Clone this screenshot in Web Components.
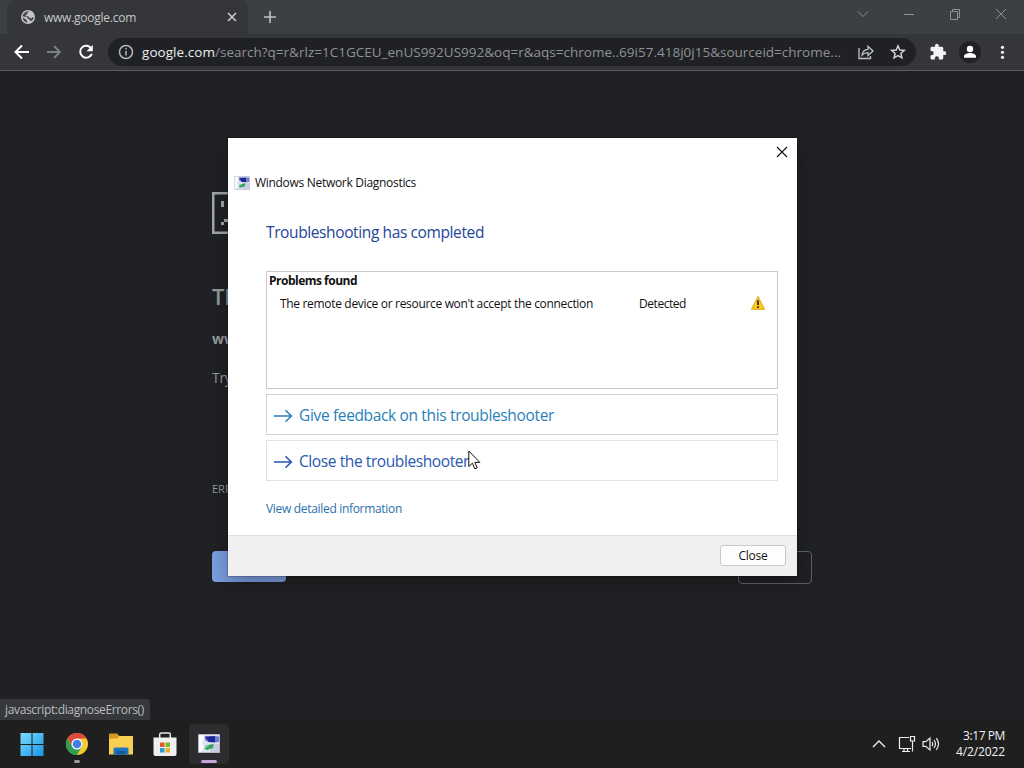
<!DOCTYPE html>
<html lang="en">
<head>
<meta charset="utf-8">
<title>www.google.com</title>
<style>
  html, body { margin: 0; height: 100%; overflow: hidden; background: #202124; }
  body { font-family: "Open Sans", "Noto Sans", sans-serif; }
</style>
</head>
<body>
<desktop-screen>
  <browser-tabs slot="browser" label="www.google.com"></browser-tabs>
  <browser-toolbar slot="browser" host="google.com" path="/search?q=r&amp;rlz=1C1GCEU_enUS992US992&amp;oq=r&amp;aqs=chrome..69i57.418j0j15&amp;sourceid=chrome..."></browser-toolbar>
  <error-page slot="browser"></error-page>
  <status-bubble slot="overlay"><fit-label width="139">javascript:diagnoseErrors()</fit-label></status-bubble>
  <diag-dialog slot="overlay">
    <fit-label slot="app" width="161">Windows Network Diagnostics</fit-label>
    <fit-label slot="heading" width="218">Troubleshooting has completed</fit-label>
    <problem-list>
      <fit-label slot="title" width="88">Problems found</fit-label>
      <fit-label slot="problem" width="313">The remote device or resource won't accept the connection</fit-label>
      <fit-label slot="state" width="47">Detected</fit-label>
    </problem-list>
    <command-link><fit-label width="255">Give feedback on this troubleshooter</fit-label></command-link>
    <command-link variant="hot"><fit-label width="170">Close the troubleshooter</fit-label></command-link>
    <fit-label slot="details" width="136">View detailed information</fit-label>
    <fit-label slot="button" width="29">Close</fit-label>
  </diag-dialog>
  <mouse-cursor slot="overlay"></mouse-cursor>
  <task-bar slot="taskbar">
    <fit-label slot="time" width="42">3:17 PM</fit-label>
    <fit-label slot="date" width="49">4/2/2022</fit-label>
  </task-bar>
</desktop-screen>

<script>
"use strict";

(function () {
  /* ── Helper: class from a html string ──────────────────────── */
  function define(name, html, setup) {
    var tpl = document.createElement("template");
    tpl.innerHTML = html;
    customElements.define(name, class extends HTMLElement {
      constructor() {
        super();
        this.attachShadow({ mode: "open" }).appendChild(tpl.content.cloneNode(true));
      }
      connectedCallback() {
        if (setup) setup(this, this.shadowRoot);
      }
    });
  }

  /* ── Desktop ───────────────────────────────────────────────── */
  define("desktop-screen", `
    <style>
      :host { display: flex; flex-direction: column; position: relative; width: 1024px; height: 768px; overflow: hidden; }
      .browser { display: flex; flex-direction: column; height: 720px; background: #202124; }
    </style>
    <div class="browser"><slot name="browser"></slot></div>
    <slot name="taskbar"></slot>
    <slot name="overlay"></slot>
  `);

  /* ── Tab strip ─────────────────────────────────────────────── */
  define("browser-tabs", `
    <style>
      :host { display: flex; height: 34px; flex: none; background: #3c4043; color: #c6c8ca; justify-content: space-between; }
      .left { display: flex; align-items: center; padding-left: 7px; }
      .tab { display: flex; align-items: center; box-sizing: border-box; width: 241px; height: 34px; padding: 0 10px 0 13px; background: #35363a; border-radius: 8px 8px 0 0; font-size: 12px; }
      .tab .text { margin-left: 8px; flex: 1; }
      svg { display: block; fill: none; }
      .plus { margin-left: 15px; }
      .win { display: flex; stroke: #8e9194; }
      .win svg { margin-top: 7px; }
    </style>
    <div class="left">
      <div class="tab">
        <svg width="16" height="16" viewBox="0 0 16 16"><circle cx="8" cy="8" r="7" fill="#c1c3c6"/><path fill="#35363a" d="M9.300 2.200 7.300 3.700v1.600l-1.600.5v1.400l3 .2.900 1.600 1.700.4 1-1.200 1.500.2c-.2 1.200-.8 2.300-1.700 3.100L10.500 12l-.700-1.300-2-1L7.200 8.200l-4.500-.9c-.5 3 1.700 5.900 4.600 6.300L7 11.500 5.300 10 2.500 8.500C2.300 4.900 5.600 1.700 9.300 2.200z" opacity=".9"/></svg>
        <span class="text"></span>
        <svg width="12" height="12" viewBox="0 0 12 12" stroke="#c9cbcd" stroke-width="1.600"><path d="m2 2 8 8M10 2l-8 8"/></svg>
      </div>
      <svg class="plus" width="14" height="14" viewBox="0 0 14 14" stroke="#bfc2c4" stroke-width="1.600"><path d="M7 1v12M1 7h12"/></svg>
    </div>
    <div class="win">
      <svg width="46" height="14" viewBox="0 0 46 14"><path d="m18 4.500 5 5 5-5"/></svg>
      <svg width="46" height="14" viewBox="0 0 46 14"><path d="M18 7.500h10"/></svg>
      <svg width="46" height="14" viewBox="0 0 46 14"><path d="M18.500 4.500h7v8h-7zM20.500 4.500v-2h7v8h-2"/></svg>
      <svg width="46" height="14" viewBox="0 0 46 14"><path d="m18 2 10 10M28 2 18 12"/></svg>
    </div>
  `, function (el, root) {
    root.querySelector(".text").innerHTML = '<fit-label width="92">' + el.getAttribute("label") + "</fit-label>";
  });

  /* ── Toolbar ───────────────────────────────────────────────── */
  define("browser-toolbar", `
    <style>
      :host { display: flex; align-items: center; flex: none; box-sizing: border-box; height: 37px; padding: 0 9px 0 12px; background: #35363a; border-bottom: 1px solid #5b5d5f; }
      svg { display: block; flex: none; fill: none; }
      .nav { display: flex; gap: 12px; width: 96px; }
      .omnibox { display: flex; align-items: center; box-sizing: border-box; width: 808px; height: 28px; border-radius: 14px; padding: 0 9px 0 9px; background: #202124; font-size: 13.5px; }
      .url { display: flex; margin-left: 7px; flex: 1; }
      .host { color: #eceef0; }
      .path { color: #8f9296; }
      .star { margin-left: 14px; }
      .right { display: flex; align-items: center; margin-left: 13px; }
      .avatar { margin-left: 12px; }
      .dots { margin-left: 15px; }
    </style>
    <div class="nav">
      <svg width="20" height="20" viewBox="0 0 20 20" stroke="#fff" stroke-width="2"><path d="M17 10H4M10 3.500 3.500 10l6.500 6.500"/></svg>
      <svg width="20" height="20" viewBox="0 0 20 20" stroke="#7d8083" stroke-width="1.800"><path d="M3 10h13M10 4l6 6-6 6"/></svg>
      <svg width="20" height="20" viewBox="0 0 20 20"><path d="M15.300 6.500A6 6 0 1 0 15.800 11.800" stroke="#fff" stroke-width="2"/><path d="M16.800 3v6.300h-6.300z" fill="#fff"/></svg>
    </div>
    <div class="omnibox">
      <svg width="18" height="18" viewBox="0 0 18 18" stroke="#b3b6b9" stroke-width="1.500"><circle cx="9" cy="9" r="6.500"/><path d="M9 8v4.500M9 5v1.600"/></svg>
      <div class="url"><span class="host"></span><span class="path"></span></div>
      <svg width="18" height="18" viewBox="0 0 18 18" stroke="#c1c4c7" stroke-width="1.300"><path d="M2 5v10.500h11.500V13M5 12c.5-4 2.500-5.500 6-5.700V3.200L16 8l-5 4.500V9.600c-2.500 0-4.300.6-6 2.400z"/></svg>
      <svg class="star" width="18" height="18" viewBox="0 0 18 18" stroke="#cfd1d4" stroke-width="1.500"><path d="m9 2.800 1.800 4.200 4.500.4-3.400 3 1 4.400L9 12.500l-3.900 2.300 1-4.400-3.400-3 4.500-.4z"/></svg>
    </div>
    <div class="right">
      <svg width="18" height="18" viewBox="0 0 24 24"><path fill="#f1f3f4" d="M20.500 11H19V7c0-1.100-.9-2-2-2h-4V3.500a2.500 2.500 0 0 0-5 0V5H4c-1.100 0-2 .9-2 2v3.800h1.500a2.700 2.700 0 0 1 0 5.400H2V20c0 1.100.9 2 2 2h3.800v-1.500a2.700 2.700 0 0 1 5.400 0V22H17c1.100 0 2-.9 2-2v-4h1.500a2.500 2.500 0 0 0 0-5z"/></svg>
      <svg class="avatar" width="22" height="22" viewBox="0 0 22 22"><circle cx="11" cy="11" r="11" fill="#202124"/><circle cx="11" cy="8" r="3.200" fill="#fff"/><path d="M5 16.800v-1.600c0-2 4-3.200 6-3.200s6 1.200 6 3.200v1.600z" fill="#fff"/></svg>
      <svg class="dots" width="14" height="18" viewBox="0 0 14 18"><g fill="#f1f3f4"><circle cx="6.500" cy="4.300" r="1.600"/><circle cx="6.500" cy="9.300" r="1.600"/><circle cx="6.500" cy="14.300" r="1.600"/></g></svg>
    </div>
  `, function (el, root) {
    function label(sel, width, text) {
      var fit = document.createElement("fit-label");
      fit.setAttribute("width", width);
      fit.textContent = text;
      root.querySelector(sel).appendChild(fit);
    }
    label(".host", 73, el.getAttribute("host"));
    label(".path", 626, el.getAttribute("path"));
  });

  /* ── Page under the dialog ─────────────────────────────────── */
  define("error-page", `
    <style>
      :host { display: block; box-sizing: border-box; width: 1024px; padding: 121px 212px 0; color: #96999d; white-space: nowrap; }
      svg { display: block; }
      .title { margin-top: 43px; height: 40px; line-height: 39px; font-size: 22px; font-weight: 600; }
      .site { margin-top: 12px; height: 20px; line-height: 20px; font-size: 14px; font-weight: 700; }
      .hint { margin-top: 19px; height: 20px; line-height: 20px; font-size: 14px; letter-spacing: -.3px; }
      .code { margin-top: 91px; height: 20px; line-height: 20px; font-size: 11px; }
      .buttons { display: flex; justify-content: space-between; margin-top: 52px; }
      .reload { width: 74px; height: 31px; border-radius: 4px; background: #7b9fe0; }
      .details { box-sizing: border-box; width: 74px; height: 33px; border-radius: 4px; border: 1px solid #5f6368; }
    </style>
    <svg width="36" height="42" viewBox="0 0 36 42" fill="none"><path d="M35 1.250H1.250v39.500H35z" stroke="#a3a6a9" stroke-width="2.500"/><path d="M9 9h3v6H9zM9 30h3v3H9zM12 27h12v3H12z" fill="#a3a6a9"/></svg>
    <div class="title">Th</div>
    <div class="site">ww</div>
    <div class="hint">Try</div>
    <div class="code">ERR</div>
    <div class="buttons"><div class="reload"></div><div class="details"></div></div>
  `);

  define("status-bubble", `
    <style>
      :host { position: absolute; left: 0; top: 699px; box-sizing: border-box; width: 150px; height: 21px; padding-left: 5px; line-height: 21px; font-size: 12px; color: #b9bcbf; background: #37383c; border-radius: 0 4px 0 0; }
    </style>
    <slot></slot>
  `);

  /* ── Diagnostics dialog ────────────────────────────────────── */
  define("diag-dialog", `
    <style>
      :host { position: absolute; left: 228px; top: 138px; width: 569px; height: 438px; display: flex; flex-direction: column; background: #fff; color: #111; font-size: 12px; box-shadow: 0 0 1px #000, 0 8px 20px rgba(0,0,0,.3); }
      svg { display: block; }
      .bar { display: flex; justify-content: flex-end; align-items: center; height: 28px; padding: 0 9px 2px 0; box-sizing: content-box; }
      .app { display: flex; align-items: center; gap: 5px; height: 29px; padding-left: 6px; }
      .body { display: flex; flex-direction: column; gap: 5px; width: 512px; margin: 0 0 0 38px; }
      .heading { display: flex; align-items: center; box-sizing: border-box; height: 69px; padding-top: 1px; color: #24449a; font-size: 15.5px; }
      .details { display: flex; align-items: center; box-sizing: border-box; height: 54px; padding-top: 1px; margin-top: -5px; color: #2a70b0; }
      .foot { display: flex; align-items: center; justify-content: flex-end; box-sizing: border-box; height: 41px; padding-right: 11px; background: #f0f0f0; border-top: 1px solid #dfdfdf; }
      .btn { display: flex; align-items: center; justify-content: center; box-sizing: border-box; width: 66px; height: 21px; margin-bottom: 1px; padding-bottom: 1px; border: 1px solid #c9c9c9; border-radius: 3px; background: #fdfdfd; }
    </style>
    <div class="bar"><svg width="12" height="12" viewBox="0 0 12 12" fill="none" stroke="#111" stroke-width="1.100"><path d="m1 1 10 10M11 1 1 11"/></svg></div>
    <div class="app"><diag-icon size="16"></diag-icon><slot name="app"></slot></div>
    <div class="body">
      <div class="heading"><slot name="heading"></slot></div>
      <slot></slot>
      <div class="details"><slot name="details"></slot></div>
    </div>
    <div class="foot"><div class="btn"><slot name="button"></slot></div></div>
  `);

  define("problem-list", `
    <style>
      :host { display: block; box-sizing: border-box; height: 118px; border: 1px solid #c8ccce; color: #111; }
      .title { height: 18px; line-height: 18px; padding-left: 2px; font-weight: 700; }
      .row { display: grid; grid-template-columns: 359px 111px 16px; align-items: center; height: 26px; padding-left: 13px; }
      svg { display: block; }
    </style>
    <div class="title"><slot name="title"></slot></div>
    <div class="row">
      <slot name="problem"></slot>
      <slot name="state"></slot>
      <svg width="16" height="16" viewBox="0 0 16 16"><path d="M8 1.500 14.600 14.300H1.400z" fill="#fbc91b" stroke="#e3a81d" stroke-linejoin="round"/><path d="M7.100 5.200h1.800v4.800H7.100zM7.100 11.200h1.800V13H7.100z" fill="#3c2a10"/></svg>
    </div>
  `);

  define("command-link", `
    <style>
      :host { display: flex; align-items: center; box-sizing: border-box; height: 41px; padding: 1px 0 0 7px; gap: 6px; border: 1px solid #cbd4d8; color: #2b7fb9; font-size: 15.5px; }
      :host([variant="hot"]) { border-color: #e0e3e5; color: #2a57b0; }
      svg { display: block; margin-top: 2px; }
    </style>
    <svg width="19" height="14" viewBox="0 0 19 14" fill="none" stroke="currentColor" stroke-width="1.600"><path d="M0 7h17.500M11.500 1.200 17.300 7l-5.800 5.800"/></svg>
    <slot></slot>
  `);

  /* two monitors on a grey tile, used by the dialog and the taskbar */
  define("diag-icon", `
    <style>:host { display: block; } svg { display: block; }</style>
    <svg viewBox="0 0 22 19" preserveAspectRatio="none"><path d="M.5.500h21v18H.500z" fill="#dfe3ee" stroke="#b3b8c6"/><path d="M1 1h6L4 9l2 5-3 4H1z" fill="#fafbfd"/><path d="M14 10h7v8h-9z" fill="#c9cddd"/><path d="M6.500 2.500 17 2v6.500L10.500 8z" fill="#1d2796"/><path d="m17 2 4 .5v5.500L17 8.500z" fill="#6f7fd0"/><path d="m6.500 2.500 4 5.500-3-1.500z" fill="#5d6fc4"/><path d="m7.500 11.500 8-1.500-.5 4-6 2-3-1.500 2.500-1z" fill="#2fa35f"/><path d="m6 12.500 4-1.500 1 1.500-4 1z" fill="#83d6a0"/></svg>
  `, function (el, root) {
    root.querySelector("svg").setAttribute("width", el.getAttribute("size"));
    root.querySelector("svg").setAttribute("height", Math.round(el.getAttribute("size") * 0.87));
  });

  define("mouse-cursor", `
    <style>:host { position: absolute; left: 468px; top: 450px; } svg { display: block; }</style>
    <svg width="13" height="20" viewBox="0 0 13 20"><path d="M.8 1v15.500l3.600-3.300 2.400 5.600 2.400-1-2.400-5.400h5z" fill="#fff" stroke="#111"/></svg>
  `);

  /* ── Taskbar ───────────────────────────────────────────────── */
  define("task-bar", `
    <style>
      :host { display: flex; justify-content: space-between; height: 48px; background: #1f1f20; color: #f0f0f0; font-size: 12px; }
      svg { display: block; }
      .apps { display: flex; align-items: center; gap: 4px; padding-left: 12px; }
      .app { display: flex; flex-direction: column; align-items: center; box-sizing: border-box; width: 40px; height: 40px; border-radius: 4px; padding-top: 8px; }
      .chrome { margin-left: 1px; }
      .app.on { background: #2d2d2f; }
      .mark { flex: none; width: 6px; height: 3px; border-radius: 2px; margin-top: 4px; background: #9a9a9a; }
      .on .mark { width: 16px; margin-top: 7px; background: #c9a2dc; }
      .on diag-icon { margin-top: 2px; }
      .tray { display: flex; align-items: center; padding-right: 19px; }
      .net { margin-left: 12px; }
      .sound { margin-left: 6px; }
      .clock { display: flex; flex-direction: column; align-items: flex-end; width: 52px; margin-left: 13px; line-height: 16px; }
    </style>
    <div class="apps">
      <div class="app"><svg width="24" height="24" viewBox="0 0 24 24"><defs><linearGradient id="w" x1="0" y1="0" x2="1" y2="1"><stop offset="0" stop-color="#7fdcfa"/><stop offset="1" stop-color="#1596e6"/></linearGradient></defs><path fill="url(#w)" d="M.500 1h11v11H.500zM12.500 1h11v11h-11zM.500 13h11v11H.500zM12.500 13h11v11h-11z"/></svg></div>
      <div class="app chrome"><svg width="24" height="24" viewBox="0 0 24 24"><circle cx="12" cy="12" r="11" fill="#f6c932"/><path d="M2.470 6.500A11 11 0 0 1 21.530 6.500H12L7.240 14.750z" fill="#dc4a3d"/><path d="M2.470 6.500A11 11 0 0 0 12 23l4.760-8.250H7.240z" fill="#2f9e54"/><circle cx="12" cy="12" r="5.500" fill="#fff"/><circle cx="12" cy="12" r="4.300" fill="#3f7fe4"/></svg><div class="mark"></div></div>
      <div class="app"><svg width="26" height="24" viewBox="0 0 26 24"><path d="M1 2.500a1 1 0 0 1 1-1h7l2.500 2.500H24a1 1 0 0 1 1 1V9H1z" fill="#d59a1c"/><path d="M1 6.500h8L11.500 4H24a1 1 0 0 1 1 1v17.500H1z" fill="#f8cf52"/><path d="M5.500 22.500V17A1.500 1.500 0 0 1 7 15.500h12a1.500 1.500 0 0 1 1.500 1.500v5.500z" fill="#1d75bc"/><path d="M8.500 19h9v3.500h-9z" fill="#145b9d"/></svg></div>
      <div class="app"><svg width="24" height="24" viewBox="0 0 24 24"><path d="M6.700 6.500v-4A1.500 1.500 0 0 1 8.200 1h7.600a1.500 1.500 0 0 1 1.500 1.500v4" fill="none" stroke="#e8e8e8" stroke-width="1.500"/><path d="M.500 5.500h23V22a2 2 0 0 1-2 2h-19a2 2 0 0 1-2-2z" fill="#f0f0f0"/><path d="M7 10.500h4.500V15H7z" fill="#e65a2a"/><path d="M12.500 10.500H17V15h-4.500z" fill="#79b72d"/><path d="M7 16h4.500v4.500H7z" fill="#2b9bd8"/><path d="M12.500 16H17v4.500h-4.500z" fill="#efb21e"/></svg></div>
      <div class="app on"><diag-icon size="22"></diag-icon><div class="mark"></div></div>
    </div>
    <div class="tray">
      <svg width="14" height="10" viewBox="0 0 14 10" fill="none" stroke="#eee" stroke-width="1.400"><path d="m1 8 6-6 6 6"/></svg>
      <svg class="net" width="18" height="18" viewBox="0 0 18 18" fill="none" stroke="#eee" stroke-width="1.200"><path d="M11 2.500H1.500v11h11.500M4 16.500h8M6 13.500v3M9.500 13.500v3M12.500 1.500h4V6h-4zM14.500 6v10.500"/></svg>
      <svg class="sound" width="18" height="16" viewBox="0 0 18 16" fill="none" stroke="#eee" stroke-width="1.200"><path d="M1 5.700h2.800L8 2v12l-4.200-3.700H1zM10 6q1.400 2 0 4M12 4q3 4 0 8M14.300 2.200q4.400 5.800 0 11.600"/></svg>
      <div class="clock"><slot name="time"></slot><slot name="date"></slot></div>
    </div>
  `);

  /* ── Label tracked to a given width ────────────────────────── */
  define("fit-label", `
    <style>
      :host { display: inline-block; white-space: nowrap; }
      span { display: inline-block; }
    </style>
    <span><slot></slot></span>
  `, function (el, root) {
    var span = root.querySelector("span");
    var width = Number(el.getAttribute("width"));
    var count = el.textContent.length;
    span.style.letterSpacing = "0";
    span.style.letterSpacing = (width - span.getBoundingClientRect().width) / count + "px";
    el.style.width = width + "px";
  });
})();
</script>
</body>
</html>
